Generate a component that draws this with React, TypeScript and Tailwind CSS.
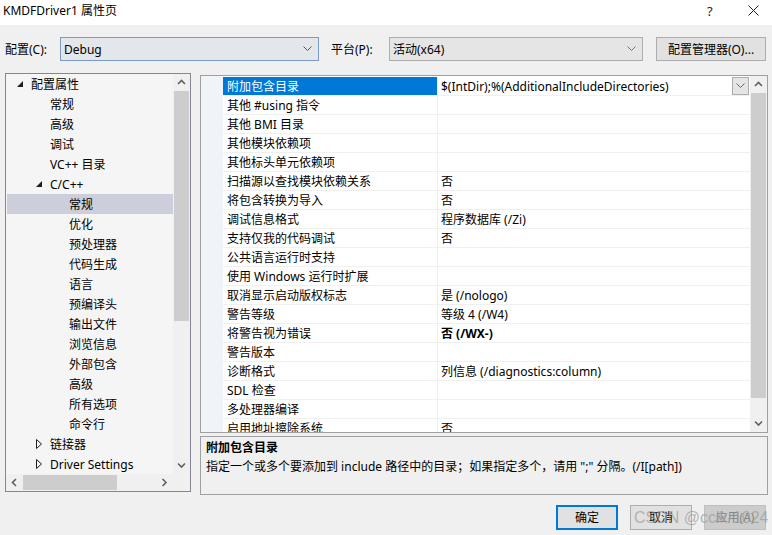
import React from 'react';

const FONT = "font-['Noto_Sans','Noto_Sans_CJK_SC',sans-serif]";

type TreeItem = { t: string; lvl: 0 | 1 | 2; tri?: 'open' | 'closed'; sel?: boolean };

const tree: TreeItem[] = [
  { t: '配置属性', lvl: 0, tri: 'open' },
  { t: '常规', lvl: 1 },
  { t: '高级', lvl: 1 },
  { t: '调试', lvl: 1 },
  { t: 'VC++ 目录', lvl: 1 },
  { t: 'C/C++', lvl: 1, tri: 'open' },
  { t: '常规', lvl: 2, sel: true },
  { t: '优化', lvl: 2 },
  { t: '预处理器', lvl: 2 },
  { t: '代码生成', lvl: 2 },
  { t: '语言', lvl: 2 },
  { t: '预编译头', lvl: 2 },
  { t: '输出文件', lvl: 2 },
  { t: '浏览信息', lvl: 2 },
  { t: '外部包含', lvl: 2 },
  { t: '高级', lvl: 2 },
  { t: '所有选项', lvl: 2 },
  { t: '命令行', lvl: 2 },
  { t: '链接器', lvl: 1, tri: 'closed' },
  { t: 'Driver Settings', lvl: 1, tri: 'closed' },
];

const pad = ['pl-[8px]', 'pl-[27px]', 'pl-[46px]'];

type Row = { n: string; v: string; b?: boolean; sel?: boolean };
const rows: Row[] = [
  { n: '附加包含目录', v: '$(IntDir);%(AdditionalIncludeDirectories)', sel: true },
  { n: '其他 #using 指令', v: '' },
  { n: '其他 BMI 目录', v: '' },
  { n: '其他模块依赖项', v: '' },
  { n: '其他标头单元依赖项', v: '' },
  { n: '扫描源以查找模块依赖关系', v: '否' },
  { n: '将包含转换为导入', v: '否' },
  { n: '调试信息格式', v: '程序数据库 (/Zi)' },
  { n: '支持仅我的代码调试', v: '否' },
  { n: '公共语言运行时支持', v: '' },
  { n: '使用 Windows 运行时扩展', v: '' },
  { n: '取消显示启动版权标志', v: '是 (/nologo)' },
  { n: '警告等级', v: '等级 4 (/W4)' },
  { n: '将警告视为错误', v: '否 (/WX-)', b: true },
  { n: '警告版本', v: '' },
  { n: '诊断格式', v: '列信息 (/diagnostics:column)' },
  { n: 'SDL 检查', v: '' },
  { n: '多处理器编译', v: '' },
  { n: '启用地址擦除系统', v: '否' },
];

const ChevDown = ({ c = '#606060', w = 9 }: { c?: string; w?: number }) => (
  <svg width={w} height="6" viewBox="0 0 9 6">
    <polyline points="0.5,0.5 4.5,4.5 8.5,0.5" fill="none" stroke={c} strokeWidth="1" />
  </svg>
);

const ScrollArrow = ({ dir }: { dir: 'up' | 'down' | 'left' | 'right' }) => {
  const pts: Record<string, string> = {
    up: '1,6 4.5,2.5 8,6',
    down: '1,2.5 4.5,6 8,2.5',
    left: '6,1 2.5,4.5 6,8',
    right: '2.5,1 6,4.5 2.5,8',
  };
  return (
    <svg width="9" height="9" viewBox="0 0 9 9">
      <polyline points={pts[dir]} fill="none" stroke="#606060" strokeWidth="1.6" />
    </svg>
  );
};

const Tri = ({ kind }: { kind: 'open' | 'closed' }) =>
  kind === 'open' ? (
    <svg width="6" height="6" viewBox="0 0 6 6">
      <polygon points="0,6 6,6 6,0" fill="#1e1e1e" />
    </svg>
  ) : (
    <svg width="6" height="10" viewBox="0 0 6 10">
      <polygon points="0.5,0.5 5.5,5 0.5,9.5" fill="none" stroke="#1e1e1e" strokeWidth="1" />
    </svg>
  );

export default function App() {
  return (
    <div className={`${FONT} relative w-[772px] h-[535px] overflow-hidden bg-[#f0f0f0] text-[12px] text-black leading-[16px]`}>
      {/* Title bar */}
      <div className="h-[25px] bg-white flex items-center">
        <div className="pl-[3px] pb-[3px] flex-1">KMDFDriver1 属性页</div>
        <div className="w-[14px] pb-[3px] text-[13px] text-[#222]">?</div>
        <div className="w-[27px]" />
        <div className="w-[12px] pb-[5px]">
          <svg width="11" height="11" viewBox="0 0 11 11">
            <path d="M0.5 0.5 L10.5 10.5 M10.5 0.5 L0.5 10.5" stroke="#222" strokeWidth="1" />
          </svg>
        </div>
        <div className="w-[12px]" />
      </div>

      {/* Config row */}
      <div className="mt-[12px] h-[24px] flex items-center">
        <div className="w-[60px] pl-[5px] pt-[2px]">配置(C):</div>
        <div className="w-[259px] h-[24px] border border-[#7a9cc4] bg-[#e3e6ea] flex items-center justify-between pl-[3px] pr-[6px]">
          <span className="pt-[2px]">Debug</span>
          <ChevDown c="#555" />
        </div>
        <div className="w-[70px] pl-[12px] pt-[2px]">平台(P):</div>
        <div className="w-[254px] h-[24px] border border-[#adadad] bg-[#e5e5e5] flex items-center justify-between pl-[3px] pr-[6px]">
          <span className="pt-[2px]">活动(x64)</span>
          <ChevDown c="#777" />
        </div>
        <div className="w-[13px]" />
        <div className="w-[110px] h-[24px] border border-[#adadad] bg-[#e1e1e1] flex items-center justify-center pt-[2px]">
          配置管理器(O)...
        </div>
      </div>

      {/* Main area */}
      <div className="mt-[12px] flex">
        {/* Tree panel */}
        <div className="ml-[5px] w-[186px] h-[419px] border border-[#828790] bg-[#f0f0f0] flex flex-col">
          <div className="flex h-[401px]">
            <div className="w-[167px] bg-[#f5f5f5] pl-[1px] overflow-hidden">
              {tree.map((it, i) => (
                <div
                  key={i}
                  className={`h-[20px] flex items-center ${pad[it.lvl]} ${it.sel ? 'bg-[#cccedb]' : ''}`}
                >
                  <div className="w-[16px] flex items-center justify-start pl-[2px]">
                    {it.tri ? <Tri kind={it.tri} /> : null}
                  </div>
                  <span className="whitespace-nowrap pt-[2px]">{it.t}</span>
                </div>
              ))}
            </div>
            <div className="w-[17px] bg-[#f0f0f0] flex flex-col">
              <div className="h-[17px] flex items-center justify-center"><ScrollArrow dir="up" /></div>
              <div className="h-[230px] mx-[1px] bg-[#cdcdcd]" />
              <div className="flex-1" />
              <div className="h-[17px] flex items-center justify-center"><ScrollArrow dir="down" /></div>
            </div>
          </div>
          <div className="flex h-[17px]">
            <div className="w-[167px] flex items-center">
              <div className="w-[17px] flex items-center justify-center"><ScrollArrow dir="left" /></div>
              <div className="w-[94px] h-[15px] bg-[#cdcdcd]" />
              <div className="flex-1" />
              <div className="w-[17px] flex items-center justify-center"><ScrollArrow dir="right" /></div>
            </div>
            <div className="flex-1" />
          </div>
        </div>

        {/* Right area */}
        <div className="ml-[9px] w-[568px] flex flex-col">
          {/* Property grid */}
          <div className="mt-[2px] h-[358px] border border-[#a0a0a0] bg-white flex overflow-hidden">
            <div className="w-[22px] bg-[#f0f3f8]" />
            <div className="w-[527px] pt-[1px] overflow-hidden">
              {rows.map((r, i) => (
                <div key={i} className="h-[19px] flex border-b border-[#f0f0f0]">
                  <div
                    className={`w-[215px] pl-[4px] pt-[2px] flex items-center whitespace-nowrap border-r border-[#f0f0f0] ${
                      r.sel ? 'bg-[#0078d7] text-white' : ''
                    }`}
                  >
                    {r.n}
                  </div>
                  <div className={`flex-1 pl-[3px] flex items-center justify-between whitespace-nowrap ${r.b ? 'font-bold' : ''}`}>
                    <span className="pt-[2px]">{r.v}</span>
                    {r.sel ? (
                      <div className="w-[17px] h-[18px] border border-[#adadad] bg-[#e5e5e5] flex items-center justify-center mr-[1px]">
                        <ChevDown c="#666" />
                      </div>
                    ) : null}
                  </div>
                </div>
              ))}
            </div>
            <div className="w-[17px] bg-[#f0f0f0] flex flex-col">
              <div className="h-[17px] flex items-center justify-center"><ScrollArrow dir="up" /></div>
              <div className="h-[305px] mx-[1px] bg-[#cdcdcd]" />
              <div className="flex-1" />
              <div className="h-[17px] flex items-center justify-center"><ScrollArrow dir="down" /></div>
            </div>
          </div>
          {/* Description */}
          <div className="mt-[3px] h-[59px] border border-[#a0a0a0] bg-[#f0f0f0] pl-[5px] pt-[3px]">
            <div className="font-bold">附加包含目录</div>
            <div className="mt-[3px]">指定一个或多个要添加到 include 路径中的目录；如果指定多个，请用 ";" 分隔。(/I[path])</div>
          </div>
        </div>
      </div>

      {/* Buttons */}
      <div className="mt-[10px] flex justify-end pr-[6px] gap-[12px]">
        <div className="w-[62px] h-[25px] border-2 border-[#0078d7] bg-[#e1e1e1] flex items-center justify-center pt-[1px]">确定</div>
        <div className="w-[62px] h-[25px] border border-[#adadad] bg-[#e1e1e1] flex items-center justify-center pt-[1px]">取消</div>
        <div className="w-[62px] h-[25px] border border-[#bfbfbf] bg-[#cccccc] text-[#838383] flex items-center justify-center pt-[1px]">应用(A)</div>
      </div>

      {/* Watermark */}
      <div className="absolute left-[634px] top-[508px] whitespace-nowrap text-[16px] leading-[20px] text-[#9a9a9a]/70 font-['Liberation_Sans',sans-serif] pointer-events-none">
        CSDN @cclk-1024
      </div>
    </div>
  );
}
